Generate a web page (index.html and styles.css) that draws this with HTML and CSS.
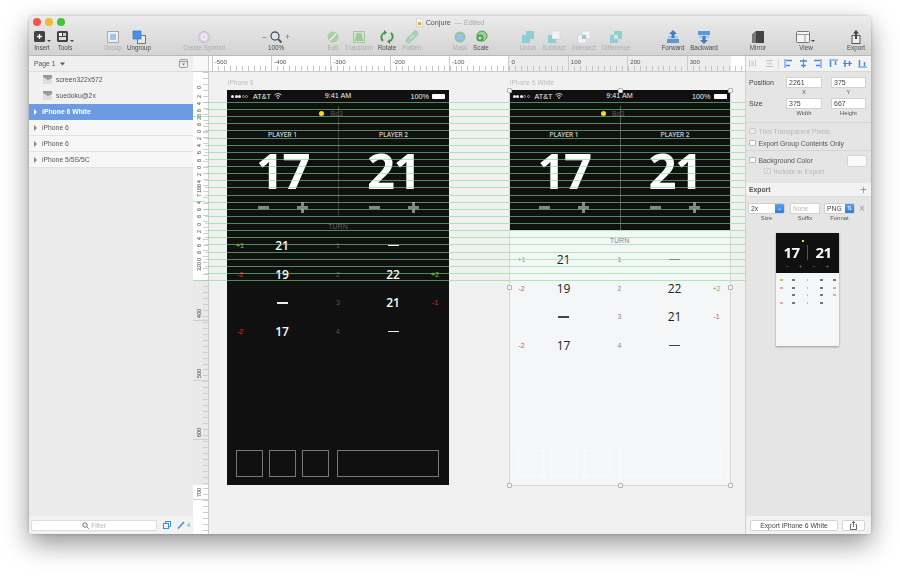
FILE: index.html
```html
<!DOCTYPE html>
<html lang="en">
<head>
<meta charset="utf-8">
<title>Conjure</title>
<link rel="stylesheet" href="styles.css">
</head>
<body>
<div class="window">
  <header class="chrome">
    <div class="titlebar">
      <div class="lights"><i class="light red"></i><i class="light yellow"></i><i class="light green"></i></div>
      <div class="title">
        <svg class="doc" width="7" height="9" viewBox="0 0 7 9"><path d="M.5.5h4l2 2v6h-6z" fill="#fafafa" stroke="#bbb" stroke-width=".5"/><rect x="2" y="4" width="3" height="3" fill="#f0a830"/></svg>
        <span>Conjure</span><span class="edited">— Edited</span>
      </div>
      <div></div>
    </div>
    <div class="tools">
      <i></i>
      <div class="tool"><svg width="20" height="14" viewBox="0 0 20 14"><rect x="2" y="1" width="11" height="11" rx="1.5" fill="#444"/><path d="M7.5 4v5M5 6.500h5" stroke="#fff" stroke-width="1.300"/><path d="M15 10h4l-2 2z" fill="#444"/></svg><span>Insert</span></div>
      <div class="tool"><svg width="20" height="14" viewBox="0 0 20 14"><rect x="2" y="1" width="11" height="11" rx="1.500" fill="#444"/><rect x="4" y="3" width="3" height="3" fill="#fff"/><rect x="8" y="3" width="3" height="3" fill="#ccc"/><rect x="4" y="7" width="7" height="3" fill="#ddd"/><path d="M15 10h4l-2 2z" fill="#444"/></svg><span>Tools</span></div>
      <i></i>
      <div class="tool off"><svg width="16" height="14" viewBox="0 0 16 14"><rect x="2.500" y="1.500" width="11" height="11" fill="#eee" stroke="#aaa"/><rect x="5" y="4" width="6" height="6" fill="#9cc4ee"/></svg><span>Group</span></div>
      <div class="tool"><svg width="16" height="14" viewBox="0 0 16 14"><rect x="6.500" y="5.500" width="8" height="8" fill="#e8e8e8" stroke="#777"/><rect x="2" y="1" width="8" height="8" fill="#4a90e8" stroke="#2f6fc0" stroke-width=".6"/></svg><span>Ungroup</span></div>
      <i></i>
      <div class="tool off"><svg width="14" height="14" viewBox="0 0 14 14"><circle cx="7" cy="7" r="5.500" fill="#e3d4ea" stroke="#c8b4d4"/><circle cx="7" cy="7" r="2.500" fill="none" stroke="#fff"/></svg><span>Create Symbol</span></div>
      <i></i>
      <div class="tool"><div class="zoomer"><b>−</b><svg width="14" height="14" viewBox="0 0 14 14"><circle cx="6" cy="6" r="4" fill="#dbe6f0" stroke="#555" stroke-width="1.300"/><path d="M9 9l3.500 3.500" stroke="#555" stroke-width="1.800"/></svg><b>+</b></div><span>100%</span></div>
      <i></i>
      <div class="tool off"><svg width="14" height="14" viewBox="0 0 14 14"><circle cx="7" cy="7" r="5.500" fill="#a9cfa6"/><path d="M3.500 10.500l7-7" stroke="#eee" stroke-width="1.500"/></svg><span>Edit</span></div>
      <div class="tool off"><svg width="14" height="14" viewBox="0 0 14 14"><rect x="1.500" y="1.500" width="11" height="11" fill="#cfe2cc" stroke="#a8c4a6"/><path d="M5 3h4l2.500 8h-9z" fill="#9fc79c"/></svg><span>Transform</span></div>
      <div class="tool"><svg width="16" height="14" viewBox="0 0 16 14"><path d="M6 2.500A5 5 0 0 0 4 11" fill="none" stroke="#3e9a3e" stroke-width="1.800"/><path d="M10 11.500A5 5 0 0 0 12 3" fill="none" stroke="#3e9a3e" stroke-width="1.800"/><path d="M5 0l3 2.500-3 2.500zM11 14l-3-2.500 3-2.500z" fill="#3e9a3e"/></svg><span>Rotate</span></div>
      <div class="tool off"><svg width="14" height="14" viewBox="0 0 14 14"><path d="M3.500 10.500l7-7" stroke="#a8d0b4" stroke-width="6" stroke-linecap="round"/><path d="M5 9l4-4" stroke="#e4f0e6" stroke-width="1"/></svg><span>Flatten</span></div>
      <i></i>
      <div class="tool off"><svg width="14" height="14" viewBox="0 0 14 14"><circle cx="7" cy="7" r="5.500" fill="#8fc4a4"/><circle cx="7" cy="7" r="3.500" fill="#9cc0e4"/></svg><span>Mask</span></div>
      <div class="tool"><svg width="14" height="14" viewBox="0 0 14 14"><circle cx="8" cy="6" r="5" fill="#9bd09b" stroke="#4ea04e"/><circle cx="6" cy="8" r="3.500" fill="#4ea04e"/><circle cx="6" cy="8" r="1.500" fill="#c4e4c4"/></svg><span>Scale</span></div>
      <i></i>
      <div class="tool off"><svg width="14" height="14" viewBox="0 0 14 14"><rect x="5" y="1" width="8" height="8" fill="#8fcfd4"/><rect x="1" y="5" width="8" height="8" fill="#8fcfd4"/></svg><span>Union</span></div>
      <div class="tool off"><svg width="14" height="14" viewBox="0 0 14 14"><rect x="5" y="1" width="8" height="8" fill="#f4f4f4" stroke="#ccc" stroke-width=".5"/><path d="M1 5h4v4h4v4H1z" fill="#8fcfd4"/></svg><span>Subtract</span></div>
      <div class="tool off"><svg width="14" height="14" viewBox="0 0 14 14"><rect x="5" y="1" width="8" height="8" fill="#f4f4f4" stroke="#ccc" stroke-width=".5"/><rect x="1" y="5" width="8" height="8" fill="#f4f4f4" stroke="#ccc" stroke-width=".5"/><rect x="5" y="5" width="4" height="4" fill="#8fcfd4"/></svg><span>Intersect</span></div>
      <div class="tool off"><svg width="14" height="14" viewBox="0 0 14 14"><rect x="5" y="1" width="8" height="8" fill="#8fcfd4"/><rect x="1" y="5" width="8" height="8" fill="#8fcfd4"/><rect x="5" y="5" width="4" height="4" fill="#e0e0e0"/></svg><span>Difference</span></div>
      <i></i>
      <div class="tool"><svg width="14" height="14" viewBox="0 0 14 14"><rect x="1" y="9" width="12" height="4" fill="#5a9ad8"/><rect x="2" y="6" width="10" height="2.500" fill="#a8c8e8"/><path d="M7 0l4 4H8.500v4h-3V4H3z" fill="#3a7fc8"/></svg><span>Forward</span></div>
      <div class="tool"><svg width="14" height="14" viewBox="0 0 14 14"><rect x="1" y="1" width="12" height="4" fill="#5a9ad8"/><rect x="2" y="5.500" width="10" height="2.500" fill="#a8c8e8"/><path d="M7 14l4-4H8.500V6h-3v4H3z" fill="#3a7fc8"/></svg><span>Backward</span></div>
      <i></i>
      <div class="tool"><svg width="14" height="14" viewBox="0 0 14 14"><rect x="5" y="1" width="8" height="12" fill="#444"/><path d="M1 4l4-3v12H1z" fill="#777"/></svg><span>Mirror</span></div>
      <i></i>
      <div class="tool"><svg width="20" height="14" viewBox="0 0 20 14"><rect x=".5" y="1.500" width="13" height="11" rx="1" fill="#f4f4f4" stroke="#777"/><path d="M1 4.500h12M9 4.500v8" stroke="#999"/><path d="M15 10h4l-2 2z" fill="#444"/></svg><span>View</span></div>
      <i></i>
      <div class="tool"><svg width="12" height="14" viewBox="0 0 12 14"><rect x="2" y="5.500" width="8" height="8" fill="#eee" stroke="#555"/><path d="M6 0l3 3.500H7V9H5V3.500H3z" fill="#444"/></svg><span>Export</span></div>
    </div>
  </header>

  <div class="main">
    <aside class="sidebar">
      <div class="page-row"><span>Page 1</span><svg class="caret" width="5" height="4" viewBox="0 0 5 4"><path d="M0 .5h5L2.500 3.500z" fill="#555"/></svg><svg class="page-toggle" width="9" height="9" viewBox="0 0 9 9"><rect x=".5" y=".5" width="8" height="8" rx="1" fill="#eee" stroke="#999"/><path d="M.5 2.500h8" stroke="#999"/><path d="M3 4.500h3L4.500 6.500z" fill="#777"/></svg></div>
      <div class="layer sub"><svg class="thumb" width="9" height="9" viewBox="0 0 9 9"><rect width="9" height="9" fill="#ddd"/><path d="M0 0h9v3L5 5 0 2z" fill="#999"/></svg><span>screen322x572</span></div>
      <div class="layer sub"><svg class="thumb" width="9" height="9" viewBox="0 0 9 9"><rect width="9" height="9" fill="#ddd"/><path d="M0 0h9v3L5 5 0 2z" fill="#999"/></svg><span>suedoku@2x</span></div>
      <div class="layer group selected"><i class="tri"></i><span>iPhone 6 White</span></div>
      <div class="layer group"><i class="tri"></i><span>iPhone 6</span></div>
      <div class="layer group"><i class="tri"></i><span>iPhone 6</span></div>
      <div class="layer group"><i class="tri"></i><span>iPhone 5/5S/5C</span></div>
      <div class="side-fill"></div>
      <div class="side-foot">
        <div class="filter"><svg width="7" height="7" viewBox="0 0 7 7"><circle cx="3" cy="3" r="2.200" fill="none" stroke="#777"/><path d="M4.800 4.800L6.800 6.800" stroke="#777"/></svg><span>Filter</span></div>
        <svg class="foot-a" width="8" height="8" viewBox="0 0 8 8"><path d="M2.500 2V.5h5v5H6" fill="none" stroke="#3d8be8"/><rect x=".5" y="2.500" width="5" height="5" fill="none" stroke="#3d8be8"/></svg>
        <svg class="foot-b" width="8" height="8" viewBox="0 0 8 8"><path d="M1 7.500L7 1" stroke="#3d8be8" stroke-width="1.500"/></svg>
        <span class="foot-n">4</span>
      </div>
    </aside>

    <section class="stage">
      <div class="corner"></div>
      <div class="ruler-top">
        <i class="rt-lead"></i>
        <span class="rt">-500</span><span class="rt">-400</span><span class="rt">-300</span><span class="rt">-200</span><span class="rt">-100</span><span class="rt">0</span><span class="rt">100</span><span class="rt">200</span><span class="rt">300</span>
      </div>
      <div class="ruler-left">
        <i class="rl-lead"></i>
        <span class="rl-zero"><b>0</b></span>
        <span class="rl"><b>2</b></span><span class="rl"><b>4</b></span><span class="rl"><b>6</b></span><span class="rl"><b>36</b></span><span class="rl"><b>8</b></span><span class="rl"><b>0</b></span><span class="rl"><b>2</b></span><span class="rl"><b>4</b></span><span class="rl"><b>6</b></span><span class="rl"><b>8</b></span><span class="rl"><b>0</b></span><span class="rl"><b>2</b></span><span class="rl"><b>4</b></span><span class="rl"><b>188</b></span><span class="rl"><b>7</b></span><span class="rl"><b>4</b></span><span class="rl"><b>6</b></span><span class="rl"><b>8</b></span><span class="rl"><b>0</b></span><span class="rl"><b>2</b></span><span class="rl"><b>4</b></span><span class="rl"><b>6</b></span><span class="rl"><b>8</b></span><span class="rl"><b>0</b></span><span class="rl"><b>320</b></span>
        <span class="rm first"><b>400</b></span><span class="rm"><b>500</b></span><span class="rm"><b>600</b></span><span class="rm"><b>700</b></span>
      </div>
      <div class="canvas">
        <div class="ab-label ab-label-a">iPhone 6</div>
        <div class="ab-label ab-label-b">iPhone 6 White</div>

        <article class="artboard board-dark">
          <div class="top">
            <div class="status"><span class="dots"><i></i><i></i><i></i><i class="o"></i><i class="o"></i></span><span>AT&amp;T</span><svg width="8" height="6" viewBox="0 0 8 6"><path d="M.5 2a5 5 0 0 1 7 0M2 3.400a3 3 0 0 1 4 0" fill="none" stroke="#fff" stroke-width=".8"/><circle cx="4" cy="5" r=".8" fill="#fff"/></svg><span class="clock">9:41 AM</span><span class="pct">100%</span><i class="battery"></i></div>
            <div class="bo"><i class="ydot"></i><span>Bo3</span></div>
            <div class="duo names"><span>PLAYER 1</span><span>PLAYER 2</span></div>
            <div class="duo scores"><span>17</span><span>21</span></div>
            <div class="duo ctrls">
              <div class="ctrl"><i class="minus"></i><i class="plus"></i></div>
              <div class="ctrl"><i class="minus"></i><i class="plus"></i></div>
            </div>
            <i class="midline"></i>
          </div>
          <div class="hist">
            <div class="turn">TURN</div>
            <div class="row"><span class="up">+1</span><b>21</b><em>1</em><b class="dash"></b><span></span></div>
            <div class="row"><span class="down">-2</span><b>19</b><em>2</em><b>22</b><span class="up">+2</span></div>
            <div class="row"><span></span><b class="dash"></b><em>3</em><b>21</b><span class="down">-1</span></div>
            <div class="row"><span class="down">-2</span><b>17</b><em>4</em><b class="dash"></b><span></span></div>
          </div>
          <div class="boxes"><i></i><i></i><i></i><i class="wide"></i></div>
        </article>

        <article class="artboard board-light">
          <div class="top">
            <div class="status"><span class="dots"><i></i><i></i><i></i><i class="o"></i><i class="o"></i></span><span>AT&amp;T</span><svg width="8" height="6" viewBox="0 0 8 6"><path d="M.5 2a5 5 0 0 1 7 0M2 3.400a3 3 0 0 1 4 0" fill="none" stroke="#fff" stroke-width=".8"/><circle cx="4" cy="5" r=".8" fill="#fff"/></svg><span class="clock">9:41 AM</span><span class="pct">100%</span><i class="battery"></i></div>
            <div class="bo"><i class="ydot"></i><span>Bo3</span></div>
            <div class="duo names"><span>PLAYER 1</span><span>PLAYER 2</span></div>
            <div class="duo scores"><span>17</span><span>21</span></div>
            <div class="duo ctrls">
              <div class="ctrl"><i class="minus"></i><i class="plus"></i></div>
              <div class="ctrl"><i class="minus"></i><i class="plus"></i></div>
            </div>
            <i class="midline"></i>
          </div>
          <div class="hist">
            <div class="turn">TURN</div>
            <div class="row"><span class="up">+1</span><b>21</b><em>1</em><b class="dash"></b><span></span></div>
            <div class="row"><span class="down">-2</span><b>19</b><em>2</em><b>22</b><span class="up">+2</span></div>
            <div class="row"><span></span><b class="dash"></b><em>3</em><b>21</b><span class="down">-1</span></div>
            <div class="row"><span class="down">-2</span><b>17</b><em>4</em><b class="dash"></b><span></span></div>
          </div>
          <div class="boxes"><i></i><i></i><i></i><i class="wide"></i></div>
        </article>

        <div class="guides"></div>
        <div class="selection">
          <i class="h tl"></i><i class="h tm"></i><i class="h tr"></i>
          <i class="h ml"></i><i class="h mr"></i>
          <i class="h bl"></i><i class="h bm"></i><i class="h br"></i>
        </div>
      </div>
    </section>

    <aside class="inspector">
      <div class="align-bar">
        <svg width="9" height="9" viewBox="0 0 9 9"><path d="M1.500 1v7M7.500 1v7" stroke="#b8cce4"/><rect x="3" y="2" width="3" height="5" fill="#d0dcea"/></svg>
        <svg width="9" height="9" viewBox="0 0 9 9"><path d="M1 1.500h7M1 7.500h7" stroke="#c4c4c4"/><rect x="2" y="3.500" width="5" height="2" fill="#d8d8d8"/></svg>
        <svg width="9" height="9" viewBox="0 0 9 9"><path d="M1 0v9" stroke="#3d8be8"/><path d="M2 1.500h6M2 6.500h4" stroke="#3d8be8" stroke-width="1.500"/></svg>
        <svg width="9" height="9" viewBox="0 0 9 9"><path d="M4.500 0v9" stroke="#3d8be8"/><path d="M1 2h7M2 6.500h5" stroke="#3d8be8" stroke-width="1.500"/></svg>
        <svg width="9" height="9" viewBox="0 0 9 9"><path d="M8 0v9" stroke="#3d8be8"/><path d="M1 1.500h6M3 6.500h4" stroke="#3d8be8" stroke-width="1.500"/></svg>
        <svg width="9" height="9" viewBox="0 0 9 9"><path d="M0 1h9" stroke="#3d8be8"/><path d="M1.500 2v6M6.500 2v4" stroke="#3d8be8" stroke-width="1.500"/></svg>
        <svg width="9" height="9" viewBox="0 0 9 9"><path d="M0 4.500h9" stroke="#3d8be8"/><path d="M2 1v7M6.500 2v5" stroke="#3d8be8" stroke-width="1.500"/></svg>
        <svg width="9" height="9" viewBox="0 0 9 9"><path d="M0 8h9" stroke="#3d8be8"/><path d="M1.500 1v6M6.500 3v4" stroke="#3d8be8" stroke-width="1.500"/></svg>
      </div>
      <div class="geo">
        <div class="geo-row"><label>Position</label><div class="field"><span class="input">2261</span><small>X</small></div><div class="field f2"><span class="input">375</span><small>Y</small></div></div>
        <div class="geo-row r2"><label>Size</label><div class="field"><span class="input">375</span><small>Width</small></div><div class="field f2"><span class="input">667</span><small>Height</small></div></div>
      </div>
      <div class="checks">
        <div class="check dim"><i class="box"></i><span>Trim Transparent Pixels</span></div>
        <div class="check"><i class="box"></i><span>Export Group Contents Only</span></div>
      </div>
      <div class="bgcolor">
        <div class="check"><i class="box"></i><span>Background Color</span><i class="swatch"></i></div>
        <div class="check dim indent"><i class="box on">✓</i><span>Include in Export</span></div>
      </div>
      <div class="export-head"><span>Export</span><b>+</b></div>
      <div class="export-row">
        <div class="ex ex-size"><div class="select"><span>2x</span><i class="drop">⌄</i></div><small>Size</small></div>
        <div class="ex ex-suffix"><div class="input suffix">None</div><small>Suffix</small></div>
        <div class="ex ex-format"><div class="select png"><span>PNG</span><i class="drop">⇅</i></div><small>Format</small></div>
        <span class="close">×</span>
      </div>
      <div class="preview">
        <div class="pv-dark">
          <i class="pv-y"></i>
          <div class="pv-nums"><span>17</span><i></i><span>21</span></div>
          <div class="pv-ctl"><span>−</span><span>+</span><span>−</span><span>+</span></div>
        </div>
        <div class="pv-light">
          <div class="pv-row"><u class="g"></u><u></u><u></u><u></u><u></u></div>
          <div class="pv-row"><u class="r"></u><u></u><u></u><u></u><u class="g"></u></div>
          <div class="pv-row"><u class="n"></u><u></u><u></u><u></u><u class="r"></u></div>
          <div class="pv-row"><u class="r"></u><u></u><u></u><u></u><u class="n"></u></div>
        </div>
      </div>
      <div class="side-fill"></div>
      <div class="insp-foot">
        <div class="btn">Export iPhone 6 White</div>
        <div class="btn share"><svg width="7" height="9" viewBox="0 0 7 9"><path d="M1.500 3.500H.5v5h6v-5h-1M3.500 6V.5M2 2L3.500.5 5 2" fill="none" stroke="#444" stroke-width=".8"/></svg></div>
      </div>
    </aside>
  </div>
</div>
</body>
</html>
```
FILE: styles.css
```css
*{box-sizing:border-box}
html,body{margin:0;height:100%}
body{background:#fff;padding:16px 29px 43px;overflow:hidden;font-family:"Liberation Sans",Arial,sans-serif;color:#444}
i,em{font-style:normal}
.window{position:relative;width:842px;height:518px;display:flex;flex-direction:column;border-radius:5px 5px 3px 3px;overflow:hidden;filter:blur(.3px)}
body::before{content:"";position:absolute;left:29px;top:16px;width:842px;height:518px;border-radius:5px;box-shadow:0 10px 26px rgba(0,0,0,.42),0 0 3px rgba(0,0,0,.25)}

.chrome{height:40px;background:linear-gradient(#ebebeb,#d3d3d3);border-bottom:1px solid #b9b9b9;flex:none}
.titlebar{height:12px;display:grid;grid-template-columns:1fr auto 1fr;align-items:center;padding:0 3px}
.lights{display:flex;gap:4.200px;padding-left:1px}
.light{width:8px;height:8px;border-radius:50%}
.red{background:#f4564e}.yellow{background:#f5b731}.green{background:#43c33c}
.title{display:flex;align-items:center;gap:3px;font-size:7.200px;color:#555}
.edited{color:#aaa;margin-left:1px}
.tools{height:28px;display:grid;align-items:start;grid-template-columns:1px 24px 22px 24px 26px 26px 22px 60px 22px 40px 24px 26px 26px 30px 20px 27px 22px 20px 25px 24px 28px 32px 32px 26px 30px 32px 23px 30px 18px 30px 20px 30px}
.tool{display:flex;flex-direction:column;align-items:center;padding-top:2px;font-size:6.300px;color:#4c4c4c;white-space:nowrap;min-width:0}
.tool svg{display:block;height:14px}
.tool span{line-height:8px}
.tool.off{color:#adadad}
.zoomer{display:flex;align-items:center;gap:2px;height:14px}
.zoomer b{font-weight:400;font-size:9px;color:#777;line-height:14px}

.main{flex:1;display:flex;min-height:0}
.sidebar{width:164px;flex:none;background:#ebebeb;display:flex;flex-direction:column;font-size:6.800px}
.page-row{height:16px;display:flex;align-items:center;padding:0 5px;gap:4px;color:#555;background:#efefef;border-bottom:1px solid #ddd}
.page-toggle{margin-left:auto}
.layer{height:16px;display:flex;align-items:center;flex:none;border-bottom:1px solid #e2e2e2;background:#f6f6f6;color:#555}
.layer.sub{padding-left:14px;gap:4px;background:#f1f1f1;border-bottom-color:#f1f1f1}
.thumb{flex:none}
.layer.group{padding-left:5px;gap:5px}
.tri{width:0;height:0;border-left:3.500px solid #888;border-top:3px solid transparent;border-bottom:3px solid transparent}
.selected{background:#6b9ce3!important;color:#fff!important;border-bottom-color:#6b9ce3!important;font-weight:700}
.selected .tri{border-left-color:#fff}
.side-fill{flex:1}
.side-foot{height:18px;background:#f2f2f2;display:flex;align-items:center;padding-left:2px;flex:none}
.filter{width:126px;height:11px;border:1px solid #dcdcdc;border-radius:2px;background:#fff;display:flex;align-items:center;justify-content:center;gap:2px;font-size:6.500px;color:#b5b5b5}
.foot-a{margin-left:6px}
.foot-b{margin-left:6px}
.foot-n{font-size:5.500px;color:#3d8be8;margin-left:2px}

.stage{flex:1;min-width:0;display:grid;grid-template-columns:16px 1fr;grid-template-rows:16px 1fr;position:relative;overflow:hidden}
.corner{background:#f8f8f8;border-right:1px solid #ccc;border-bottom:1px solid #ccc}
.ruler-top{display:flex;overflow:hidden;border-bottom:1px solid #ccc;
  background:
    repeating-linear-gradient(to right,#c6c6c6 0 1px,transparent 1px 5.940px) 2.500px 100%/100% 5px no-repeat,
    linear-gradient(to right,#fff 299.500px,#ececec 299.500px 521.500px,#fff 521.500px)}
.rt-lead{width:2.500px;flex:none}
.rt{width:59.400px;flex:none;border-left:1px solid #ccc;font-size:6.200px;color:#555;padding:2px 0 0 2px}
.ruler-left{display:flex;flex-direction:column;overflow:hidden;border-right:1px solid #ccc;
  background:
    repeating-linear-gradient(to bottom,#cdcdcd 0 1px,transparent 1px 5.950px) 100% 0/5px 100% no-repeat,
    linear-gradient(#fff 208px,#e9e9e9 208px 413px,#fff 413px)}
.rl-lead{height:11px;flex:none}
.rl-zero{height:9.500px;flex:none}
.rl{height:7.120px;flex:none}
.rl-zero,.rl,.rm{display:flex;align-items:center;font-size:5.400px;color:#444;padding-left:3px}
.rl-zero b,.rl b,.rm b{font-weight:400;writing-mode:vertical-rl;transform:rotate(180deg);line-height:6px;white-space:nowrap}
.rm{height:59.500px;flex:none;border-bottom:1px solid #cfcfcf;align-items:flex-end;padding-bottom:2px}
.rm.first{height:51px}

.canvas{position:relative;background:#f1f1f1}
.ab-label{position:absolute;top:7px;font-size:6.500px;color:#bdbdbd;line-height:8px}
.ab-label-a{left:19px}
.ab-label-b{left:301px}
.artboard{position:absolute;top:18px;width:222px;height:395px;display:flex;flex-direction:column;background:#101010}
.board-dark{left:18px}
.board-light{left:299.500px;background:#f5f6f8}
.top{position:relative;height:132px;background:#101010;flex:none;color:#fff}
.board-light .top{height:140px}
.status{height:12px;display:flex;align-items:center;padding:0 4px;font-size:7.200px;color:#eee;gap:3px}
.dots{display:flex;gap:.6px;width:19px;flex:none}
.dots i{width:3px;height:3px;border-radius:50%;background:#eee}
.dots i.o{background:none;border:.5px solid #999}
.clock{position:absolute;left:0;right:0;text-align:center;line-height:12px}
.pct{margin-left:auto}
.battery{width:13px;height:5px;background:#fff;border-radius:1px}
.bo{height:12px;margin-top:5px;display:flex;align-items:center;font-size:7px;color:#5a5a5a;padding-left:92px;gap:6.500px}
.ydot{width:5px;height:5px;border-radius:50%;background:#f7dc1e}
.duo{display:grid;grid-template-columns:1fr 1fr;justify-items:center}
.names{height:10px;margin-top:11px;font:500 6.600px/10px Roboto,sans-serif;color:#ccc}
.scores{height:44px;margin-top:8px;font:700 49px/44px "Open Sans",sans-serif;color:#fff;letter-spacing:-1.500px}
.ctrls{height:10px;margin-top:10px}
.ctrl{display:flex;gap:28px;align-items:center;height:10px}
.minus{width:11px;height:3px;background:#868686}
.plus{width:11px;height:11px;background:linear-gradient(#868686,#868686) center/100% 3px no-repeat,linear-gradient(#868686,#868686) center/3px 100% no-repeat}
.midline{position:absolute;left:111px;top:16px;bottom:7px;width:1px;background:#3e3e3e}
.board-light .midline{bottom:0;background:#555}
.hist{flex:none;color:#fff}
.board-light .hist{color:#222;padding-top:6px}
.turn{height:9px;line-height:9px;text-align:center;font-size:7px;color:#5c5c5c}
.board-light .turn{color:#888}
.row{height:28.800px;display:grid;grid-template-columns:26px 58px 54px 56px 28px;align-items:center;justify-items:center;font-size:7px;font-weight:700}
.row b{font:600 12px "Open Sans",sans-serif}
.board-light .row b{font-weight:500}
.row em{color:#555;font-size:7px;font-weight:400}
.board-light .row em{color:#888}
.row b.dash{width:11px;height:1.400px;background:#eee}
.board-light .row b.dash{background:#444}
.up{color:#5f9a20}.down{color:#a82424}
.board-light .up{color:#86b04a;font-weight:400}.board-light .down{color:#d95050;font-weight:400}
.boxes{margin-top:auto;display:flex;gap:6.500px;padding:0 9px 8.500px}
.boxes i{width:26.500px;height:26.500px;border:1px solid #777;display:block}
.boxes .wide{width:102px;margin-left:2px}
.board-light .boxes i{border-color:#fbfbfc}

.guides{position:absolute;left:-16px;right:0;top:29.500px;height:179px;
  background:
    linear-gradient(rgba(115,225,130,.6),rgba(115,225,130,.6)) 0 14.200px/12px 1px no-repeat,
    linear-gradient(rgba(115,225,130,.6),rgba(115,225,130,.6)) 0 99.700px/12px 1px no-repeat,
    linear-gradient(rgba(115,225,130,.6),rgba(115,225,130,.6)) 0 178px/12px 1px no-repeat,
    repeating-linear-gradient(to bottom,rgba(115,225,130,.6) 0 1px,transparent 1px 7.120px) 12px 0/100% 100% no-repeat}
.selection{position:absolute;left:299.500px;top:18px;width:222px;height:396px;border:1px solid #d6d6d6;border-top:0;pointer-events:none}
.h{position:absolute;width:5px;height:5px;background:#f4f4f4;border:1px solid #b4b4b4;border-radius:1px}
.tl,.tm,.tr{top:-2.500px}.ml,.mr{top:195px}.bl,.bm,.br{bottom:-3px}
.tl,.ml,.bl{left:-3px}.tm,.bm{left:108.500px}.tr,.mr,.br{right:-3px}

.inspector{width:126px;flex:none;background:#e5e5e5;display:flex;flex-direction:column;border-left:1px solid #cfcfcf;font-size:6.800px;color:#444}
.align-bar{height:16px;flex:none;border-bottom:1px solid #d8d8d8;display:flex;align-items:center;padding-left:2px;gap:5px;
  background:linear-gradient(#d8d8d8,#d8d8d8) 32px 2px/1px 11px no-repeat,#f3f3f3}
.align-bar svg{flex:none}
.align-bar svg:nth-child(1){margin-right:3px}
.align-bar svg:nth-child(2){margin-right:5px}
.align-bar svg:nth-child(3){margin-right:1px}
.align-bar svg:nth-child(5){margin-right:2px}
.align-bar svg:nth-child(7){margin-right:1px}
.geo{padding:5px 4px 4px 3px;border-bottom:1px solid #d6d6d6;flex:none}
.geo-row{display:flex;height:20px}
.r2{margin-top:1px}
.geo-row label{width:37px;line-height:11px;font-size:7px}
.field{width:36px;display:flex;flex-direction:column}
.f2{width:35px;margin-left:9px}
.input{height:11px;background:#fff;border:1px solid #d2d2d2;font-size:7px;line-height:9px;padding-left:2px;display:block}
small{display:block;text-align:center;font-size:5.800px;line-height:8px;color:#555}
.checks{height:28px;padding:2px 0 0 3px;border-bottom:1px solid #d6d6d6;flex:none}
.check{display:flex;align-items:center;height:12px;gap:3px;color:#555}
.check.dim{color:#b8b8b8}
.box{width:6.500px;height:6.500px;border:1px solid #bbb;border-radius:1px;background:#fff;flex:none;font-size:5px;line-height:5px;text-align:center;color:#aaa}
.dim .box{background:#eaeaea;border-color:#ccc}
.bgcolor{height:32px;padding:3px 0 0 3px;flex:none}
.indent{padding-left:15px;height:10px}
.swatch{margin:1px 4px 0 auto;width:20px;height:12px;background:#fafafa;border:1px solid #d4d4d4;border-radius:2px}
.export-head{height:14px;flex:none;background:#f2f2f2;display:flex;align-items:center;justify-content:space-between;padding:0 4px 0 3px;font-weight:700;font-size:6.800px;color:#555;border-bottom:1px solid #ddd}
.export-head b{font-weight:400;font-size:12px;color:#999;line-height:14px}
.export-row{display:flex;padding:6px 0 0 2px;height:28px;flex:none}
.ex-size{width:37px}.ex-suffix{width:30px;margin-left:5px}.ex-format{width:31px;margin-left:4px}
.select{height:11px;background:#fff;border:1px solid #d0d0d0;border-radius:2px;display:flex;justify-content:space-between;align-items:center;font-size:6.800px;padding-left:2px;overflow:hidden}
.drop{width:9px;height:11px;background:linear-gradient(#5ea4f2,#2a78de);color:#fff;font-size:6px;line-height:10px;text-align:center;flex:none}
.suffix{color:#bbb;font-size:6.500px}
.close{font-size:10px;color:#999;line-height:11px;margin-left:4px}
.preview{width:63px;height:113px;margin:8px 0 0 30px;box-shadow:0 1px 2px rgba(0,0,0,.35);background:#f5f6f8;flex:none;display:flex;flex-direction:column}
.pv-dark{height:40px;background:#101010;padding-top:7px;color:#fff;flex:none}
.pv-y{display:block;width:2px;height:2px;background:#f7dc1e;margin:0 0 0 26px}
.pv-nums{display:grid;grid-template-columns:1fr 1px 1fr;justify-items:center;font:700 15px/15px "Open Sans",sans-serif;margin-top:3px;letter-spacing:-.5px}
.pv-nums i{width:1px;background:#555}
.pv-ctl{display:grid;grid-template-columns:repeat(4,1fr);justify-items:center;font-size:6px;color:#777;line-height:6px;padding:3px 5px 0}
.pv-light{padding-top:6px;display:flex;flex-direction:column;gap:5px}
.pv-row{display:grid;grid-template-columns:10px 14px 14px 15px 10px;justify-items:center;align-items:center;height:2.500px}
.pv-row u{display:block;width:3px;height:2px;background:#777;text-decoration:none}
.pv-row u:nth-child(3){width:1px;background:#bbb}
.pv-row u.g{background:#a8cc60}.pv-row u.r{background:#eaa8a8}.pv-row u.n{background:transparent}
.insp-foot{height:18px;flex:none;background:#f2f2f2;display:flex;align-items:center;padding-left:4px;gap:4px}
.btn{width:88px;height:11px;background:#fff;border:1px solid #d4d4d4;border-radius:2px;text-align:center;font-size:6.800px;line-height:9px;color:#444}
.btn.share{width:23px;display:flex;align-items:center;justify-content:center}
```
